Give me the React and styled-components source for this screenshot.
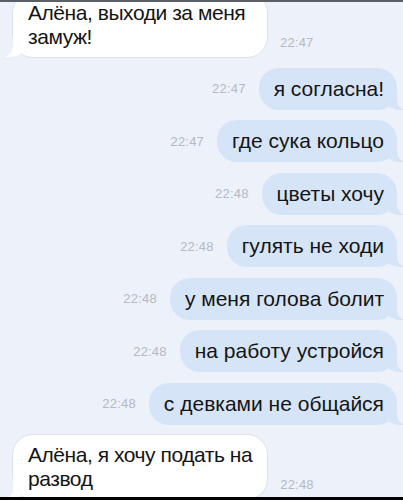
import React from 'react';
import styled, { createGlobalStyle, css } from 'styled-components';

const pageBg = '#edf1fa';
const outBg = '#d6e4f7';

const GlobalStyle = createGlobalStyle`
  html, body {
    margin: 0;
    padding: 0;
    background: ${pageBg};
  }
  body {
    font-family: "Liberation Sans", Arial, sans-serif;
  }
`;

const Screen = styled.div`
  height: 500px;
  display: flex;
  flex-direction: column;
  overflow: hidden;
  background: ${pageBg};
`;

const TopEdge = styled.div`
  flex-shrink: 0;
  height: 2px;
  background: #5b5f66;
`;

const BottomEdge = styled.div`
  flex-shrink: 0;
  height: 3px;
  background: #000;
`;

const Chat = styled.div`
  flex: 1;
  min-height: 0;
  overflow: hidden;
  display: flex;
  flex-direction: column;
  gap: 10.5px;
  padding: 0 6px 0 13px;
`;

const Row = styled.div`
  display: flex;
  flex-shrink: 0;
  justify-content: ${p => (p.$out ? 'flex-end' : 'flex-start')};
  align-items: ${p => (p.$out ? 'center' : 'flex-end')};
  gap: ${p => (p.$out ? '13px' : '13px')};
  &:first-child {
    margin-top: -9px;
  }
`;

const Time = styled.span`
  font-size: 13px;
  line-height: 15px;
  color: #b4b9c2;
  letter-spacing: 0.2px;
  padding-bottom: ${p => (p.$out ? '0' : '7px')};
`;

const outTail = css`
  &::before {
    content: '';
    position: absolute;
    bottom: 0;
    right: -7px;
    width: 20px;
    height: 20px;
    background: ${outBg};
    border-bottom-left-radius: 16px 14px;
  }
  &::after {
    content: '';
    position: absolute;
    bottom: 0;
    right: -26px;
    width: 26px;
    height: 20px;
    background: ${pageBg};
    border-bottom-left-radius: 10px;
  }
`;

const inTail = css`
  &::before {
    content: '';
    position: absolute;
    bottom: 0;
    left: -7px;
    width: 20px;
    height: 20px;
    background: #fff;
    border-bottom-right-radius: 16px 14px;
  }
  &::after {
    content: '';
    position: absolute;
    bottom: 0;
    left: -26px;
    width: 26px;
    height: 20px;
    background: ${pageBg};
    border-bottom-right-radius: 10px;
  }
`;

const Bubble = styled.div`
  position: relative;
  box-sizing: border-box;
  padding: 9px 13px 9px 15px;
  border-radius: 20px;
  font-size: 21px;
  line-height: 24px;
  color: #141414;
  white-space: pre;
  background: ${p => (p.$out ? outBg : '#fff')};
  ${p => (p.$out ? outTail : inTail)};
  ${p =>
    !p.$out &&
    css`
      min-width: 254px;
      padding: 8px 15px 8px 15px;
      letter-spacing: -0.45px;
      box-shadow: 0 0 0 1px #dde2ea;
    `}
`;

const messages = [
  { out: false, text: 'Алёна, выходи за меня\nзамуж!', time: '22:47' },
  { out: true, text: 'я согласна!', time: '22:47' },
  { out: true, text: 'где сука кольцо', time: '22:47' },
  { out: true, text: 'цветы хочу', time: '22:48' },
  { out: true, text: 'гулять не ходи', time: '22:48' },
  { out: true, text: 'у меня голова болит', time: '22:48' },
  { out: true, text: 'на работу устройся', time: '22:48' },
  { out: true, text: 'с девками не общайся', time: '22:48' },
  { out: false, text: 'Алёна, я хочу подать на\nразвод', time: '22:48' },
];

export default function App() {
  return (
    <>
      <GlobalStyle />
      <Screen>
        <TopEdge />
        <Chat>
          {messages.map((m, i) => (
            <Row key={i} $out={m.out}>
              {m.out && <Time $out>{m.time}</Time>}
              <Bubble $out={m.out}>{m.text}</Bubble>
              {!m.out && <Time>{m.time}</Time>}
            </Row>
          ))}
        </Chat>
        <BottomEdge />
      </Screen>
    </>
  );
}
